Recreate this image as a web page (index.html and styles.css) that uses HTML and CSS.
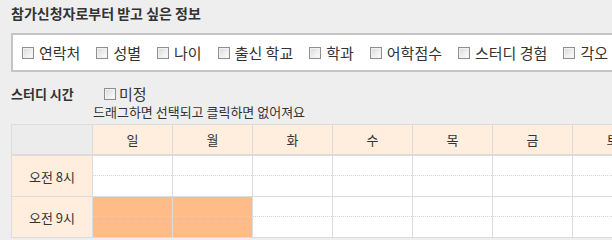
FILE: index.html
```html
<!DOCTYPE html>
<html>
  <head>
    <meta charset="utf-8" />
    <title>스터디 신청 정보</title>
    <link rel="stylesheet" href="styles.css">
  </head>
  <body>
    <h3 class="title">참가신청자로부터 받고 싶은 정보</h3>
    <div class="info-box">
      <label class="item"><input type="checkbox" /><span>연락처</span></label>
      <label class="item"><input type="checkbox" /><span>성별</span></label>
      <label class="item"><input type="checkbox" /><span>나이</span></label>
      <label class="item"><input type="checkbox" /><span>출신 학교</span></label>
      <label class="item"><input type="checkbox" /><span>학과</span></label>
      <label class="item"><input type="checkbox" /><span>어학점수</span></label>
      <label class="item"><input type="checkbox" /><span>스터디 경험</span></label>
      <label class="item"><input type="checkbox" /><span>각오</span></label>
    </div>

    <div class="study-time">
      <div class="study-label">스터디 시간</div>
      <div class="study-body">
        <label class="undecided"><input type="checkbox" /><span>미정</span></label>
        <div class="hint">드래그하면 선택되고 클릭하면 없어져요</div>
      </div>
    </div>

    <table class="schedule">
      <thead>
        <tr>
          <th class="corner"></th>
          <th>일</th>
          <th>월</th>
          <th>화</th>
          <th>수</th>
          <th>목</th>
          <th>금</th>
          <th>토</th>
        </tr>
      </thead>
      <tbody>
        <tr>
          <th class="hour">오전 8시</th>
          <td><div class="half"></div><div></div></td>
          <td><div class="half"></div><div></div></td>
          <td><div class="half"></div><div></div></td>
          <td><div class="half"></div><div></div></td>
          <td><div class="half"></div><div></div></td>
          <td><div class="half"></div><div></div></td>
          <td><div class="half"></div><div></div></td>
        </tr>
        <tr>
          <th class="hour">오전 9시</th>
          <td class="on"><div class="half"></div><div></div></td>
          <td class="on"><div class="half"></div><div></div></td>
          <td><div class="half"></div><div></div></td>
          <td><div class="half"></div><div></div></td>
          <td><div class="half"></div><div></div></td>
          <td><div class="half"></div><div></div></td>
          <td><div class="half"></div><div></div></td>
        </tr>
      </tbody>
    </table>
  </body>
</html>
```

FILE: styles.css
```css
body {
  margin: 0;
  padding: 0;
  background-color: #eeeeee;
  color: #333;
  font-family: "Noto Sans CJK KR", "Noto Sans", sans-serif;
  font-size: 13px;
  overflow: hidden;
  width: 700px;
}

input[type="checkbox"] {
  appearance: none;
  -webkit-appearance: none;
  width: 12px;
  height: 12px;
  margin: 0 5px 0 0;
  border: 1px solid #8e8e8e;
  background: linear-gradient(135deg, #d8d8d8, #f4f4f4 70%, #ffffff);
  box-shadow: inset 0 0 0 1px #f2f2f2;
  flex: none;
}

.title {
  margin: 0;
  padding: 5px 0 0 11px;
  font-size: 14px;
  line-height: 17px;
  font-weight: bold;
  color: #333;
}

.info-box {
  display: flex;
  align-items: center;
  margin: 11px 0 0 11px;
  padding: 0 0 0 9px;
  height: 35px;
  width: 660px;
  background-color: #fff;
  border: 2px solid #c4c4c4;
  white-space: nowrap;
  font-size: 15px;
}

.item {
  display: flex;
  align-items: center;
  margin-right: 16px;
  line-height: 18px;
}

.study-time {
  display: flex;
  margin: 13px 0 0 11px;
}

.study-label {
  width: 82px;
  font-weight: bold;
  line-height: 17px;
}

.undecided {
  display: flex;
  align-items: center;
  margin-left: 11px;
  line-height: 17px;
  font-size: 15px;
}

.undecided input {
  margin-right: 3px;
}

.hint {
  margin-top: 1px;
  line-height: 17px;
}

.schedule {
  margin: 4px 0 0 11px;
  border-collapse: collapse;
  table-layout: fixed;
  width: 641px;
}

.schedule th,
.schedule td {
  border: 1px solid #dcdcdc;
  padding: 0;
  font-weight: normal;
  text-align: center;
}

.schedule thead th {
  width: 79px;
  height: 29px;
  background-color: #ffeedd;
  border-bottom: 2px solid #dcdcdc;
}

.schedule thead th.corner {
  width: 80px;
  background-color: #ececec;
}

.schedule .hour {
  background-color: #ffeedd;
  height: 40px;
}

.schedule td {
  background-color: #fff;
}

.schedule td div {
  height: 20px;
}

.schedule td .half {
  height: 19px;
  border-bottom: 1px dotted #d4d4d4;
}

.schedule td.on {
  background-color: #ffbb88;
}

.schedule td.on + td.on {
  border-left-color: #f0b282;
}
```
